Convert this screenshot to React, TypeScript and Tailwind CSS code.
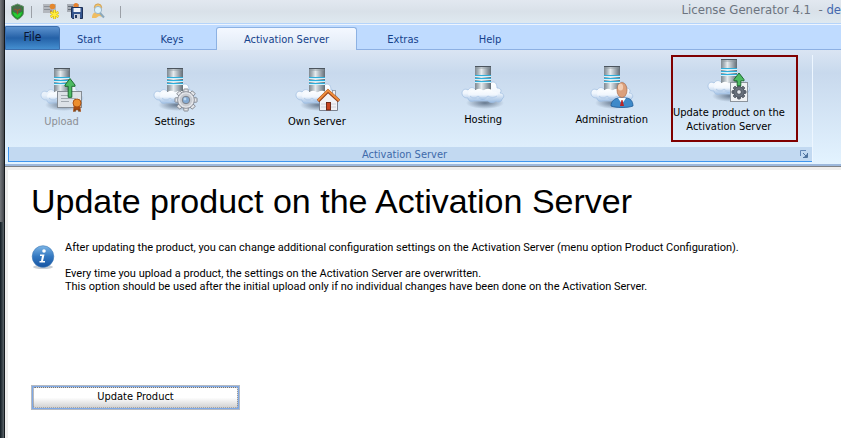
import type { ReactNode } from "react";

const TABS = ["Start", "Keys", "Activation Server", "Extras", "Help"];

const TAB_STYLES: Record<string, string> = {
  Start: "w-[58px]",
  Keys: "w-[88px] ml-[10px]",
  "Activation Server": "w-[141px]",
  Extras: "w-[92px]",
  Help: "w-[82px]",
};

function Gear({ cx, cy, r, dark = false }: { cx: number; cy: number; r: number; dark?: boolean }) {
  const stroke = dark ? "#4c535d" : "#7d828b";
  const fill = dark ? "#69717c" : "#e4e6ea";
  return (
    <g>
      {[0, 45, 90, 135].map((a) => (
        <rect
          key={a}
          x={cx - r * 0.2}
          y={cy - r}
          width={r * 0.4}
          height={r * 2}
          rx="0.6"
          fill={fill}
          stroke={stroke}
          strokeWidth="0.9"
          transform={`rotate(${a} ${cx} ${cy})`}
        />
      ))}
      <circle cx={cx} cy={cy} r={r * 0.76} fill={fill} stroke={stroke} strokeWidth="0.8" />
      <circle cx={cx} cy={cy} r={r * 0.58} fill={dark ? "#69717c" : "#c9ccd2"} />
      <circle cx={cx} cy={cy} r={r * 0.34} fill={dark ? "#e6e9ed" : "#83a9d2"} stroke={stroke} strokeWidth="1" />
      {!dark && <circle cx={cx - 1} cy={cy - 1} r="1.4" fill="#bdd8f0" />}
    </g>
  );
}

function GreenArrow({ x, y, h }: { x: number; y: number; h: number }) {
  return (
    <path
      d={`M${x} ${y} l5 6.5 v1.3 h-3.2 v${h} h-3.6 v-${h} h-3.2 v-1.3 z`}
      fill="#4dbb62"
      stroke="#1d6b32"
      strokeWidth="1"
      strokeLinejoin="round"
    />
  );
}

// Server standing on a cloud, every ribbon icon adds its own overlay
function CloudServer({ faded = false, children }: { faded?: boolean; children?: ReactNode }) {
  return (
    <svg width="46" height="46" viewBox="0 0 46 46" aria-hidden="true" className="shrink-0">
      <defs>
        <linearGradient id="tower" x1="0" x2="1" y1="0" y2="0">
          <stop offset="0" stopColor="#7f8991" />
          <stop offset="0.2" stopColor="#abb5bc" />
          <stop offset="0.4" stopColor="#e6ebee" />
          <stop offset="0.7" stopColor="#a3adb5" />
          <stop offset="1" stopColor="#626c75" />
        </linearGradient>
        <linearGradient id="cloud" x1="0" x2="0" y1="0" y2="1">
          <stop offset="0" stopColor="#ffffff" />
          <stop offset="0.55" stopColor="#f0f6fd" />
          <stop offset="1" stopColor="#9bbce2" />
        </linearGradient>
        <radialGradient id="shade">
          <stop offset="0" stopColor="#54677e" stopOpacity="0.85" />
          <stop offset="1" stopColor="#54677e" stopOpacity="0" />
        </radialGradient>
      </defs>
      <ellipse cx="25" cy="38" rx="19" ry="6" fill="url(#shade)" />
      <path
        d="M28 25c0-5 2-8 5-8 3 0 4 3 4 6 4 0 5 3 3 5 4 0 5 4 2 6 0 3-4 4-6 2-2 2-6 2-8 0H14c-3 1-6 0-6-3-4 0-6-2-6-5 0-3 3-5 6-3 2-3 5-3 7-1z"
        fill="url(#cloud)"
        stroke="#9dbbe0"
        strokeWidth="0.7"
        opacity={faded ? 0.75 : 1}
      />
      <rect x="15" y="1" width="16" height="24" fill="url(#tower)" />
      <path d="M15 1.500h16" stroke="#4c555e" />
      <path d="M16 3h14" stroke="#8d979f" strokeWidth="0.8" />
      <path d="M15 11.500h16M15 14.500h16M15 17.500h16" stroke="#d5f1fa" />
      <path d="M15 10.500h16M15 13.500h16M15 16.500h16" stroke="#2faedb" />
      <path
        d="M8 30c0-4 4-6 7-4 2-3 6-3 8 0 3-3 8-3 10 1 4-1 6 2 4 4-3 3-7 3-10 2-3 3-7 2-9 0-3 1-9 1-10-3z"
        fill="url(#cloud)"
      />
      <path d="M10 31c3 3 6 2 8 0 3 3 7 3 10 0 3 2 6 2 9 0" fill="none" stroke="#b5cdea" strokeWidth="1" />
      {children}
    </svg>
  );
}

function Certificate() {
  return (
    <g>
      <rect x="18.5" y="24.5" width="24" height="16" fill="#dde2e7" stroke="#858c94" />
      <path d="M22 28.5h8M22 31.5h15M22 34.5h8" stroke="#a2a9b0" />
      <path d="M35 36l-1 9 4-2 4 2-1-9z" fill="#a74b10" />
      <circle cx="38" cy="36" r="4" fill="#ed8e2c" stroke="#ac5415" />
      <path d="M36 42v3M40 42v3" stroke="#66421f" strokeWidth="1" />
      <GreenArrow x={31} y={11.5} h={11} />
    </g>
  );
}

function House() {
  return (
    <g>
      <rect x="38.5" y="23.5" width="3" height="6" fill="#f0f0f3" stroke="#878e9c" strokeWidth="0.8" />
      <path d="M25.500 33l8.500-8 9.500 8v10.500h-18z" fill="#f1f1f5" stroke="#7b8290" />
      <path d="M27 40h5M27 37h5M37 40h5M37 37h5" stroke="#c7cad3" strokeWidth="0.8" />
      <path d="M24 34l10-10 11 10" fill="none" stroke="#963e14" strokeWidth="3.4" />
      <path d="M24 33.500l10-10 11 10" fill="none" stroke="#ee8c3c" strokeWidth="2" />
      <rect x="32.500" y="35.500" width="4" height="7.500" fill="#c84420" stroke="#66200f" strokeWidth="0.9" />
    </g>
  );
}

function Person() {
  return (
    <g>
      <path d="M22 41c0-5 4-8 8-8h7c4 0 7 3 7 8-5 2-17 2-22 0z" fill="#3f8ac9" stroke="#205c98" strokeWidth="0.8" />
      <path d="M29 33l4 6 4-6z" fill="#ffffff" />
      <path d="M32.500 35l-1.500 6h4l-1.500-6z" fill="#ba2626" />
      <ellipse cx="33" cy="25" rx="5" ry="7.500" fill="#dba07c" stroke="#ac6b48" strokeWidth="0.7" />
      <ellipse cx="31.500" cy="22" rx="2.600" ry="3.500" fill="#f3cdb3" />
    </g>
  );
}

function GearSheet() {
  return (
    <g>
      <rect x="24.500" y="24.500" width="17" height="19" fill="#f0f2f4" stroke="#8b939c" />
      <Gear cx={33} cy={34} r={7} dark />
      <GreenArrow x={33} y={15} h={5} />
    </g>
  );
}

function RibbonButton({
  label,
  icon,
  offset = "pt-[12px]",
  disabled = false,
}: {
  label: string;
  icon: ReactNode;
  offset?: string;
  disabled?: boolean;
}) {
  return (
    <div className={`flex justify-center ${offset}`}>
      <button disabled={disabled} className="flex flex-col items-center self-start text-black disabled:text-[#8c8f94]">
        {icon}
        <span className="leading-[18px]">{label}</span>
      </button>
    </div>
  );
}

function TitleBar() {
  return (
    <header className="flex h-[23px] items-center bg-linear-to-b from-[#e2e8f0] via-[#d9e1e9] to-[#dfe9f0] pl-[5px]">
      <svg width="15" height="17" viewBox="0 0 15 17" aria-label="License Generator" role="img">
        <path d="M7.500 1l6 2.500v6c0 3-3 5.500-6 7-3-1.500-6-4-6-7v-6z" fill="#1d8f2a" stroke="#6f8873" />
        <path d="M7.500 2l5 2v4l-5 3-5-3V4z" fill="#4a6a4c" />
        <path d="M3 9l4.500 2L12 9c0 2.500-2 4.500-4.500 6C5 13.500 3 11.500 3 9z" fill="#25cc35" />
        <path d="M4.500 6l3 1.500 3-1.500M7.500 7.500v4" fill="none" stroke="#96542c" strokeWidth="1.200" />
      </svg>
      <span className="ml-[6px] h-3 w-px bg-[#9ba0a7]" />
      <button aria-label="New license" className="ml-[11px]">
        <svg width="17" height="17" viewBox="0 0 17 17">
          <path d="M0 1h13v9H0z" fill="#b4b8be" />
          <path d="M1 3.500h7M1 6.500h6" stroke="#8b9098" />
          <circle cx="9.500" cy="3.500" r="2.800" fill="#e4872d" />
          <path d="M8 6l-1 4h2z" fill="#a54b1e" />
          <path d="M11.500 7v9M7.600 9.200l7.800 4.600M15.400 9.200l-7.800 4.600" stroke="#c9a800" strokeWidth="2.600" />
          <path d="M11.500 7v9M7.600 9.200l7.800 4.600M15.400 9.200l-7.800 4.600" stroke="#ffec3d" strokeWidth="1.600" />
        </svg>
      </button>
      <button aria-label="Save" className="ml-[7px]">
        <svg width="17" height="17" viewBox="0 0 17 17">
          <path d="M0 1h12v8H0z" fill="#a7acb4" />
          <path d="M1 3.500h5M1 6.500h3" stroke="#666d76" />
          <circle cx="9" cy="2.500" r="2.500" fill="#e5812d" />
          <path d="M4.500 4.500h11v11h-10l-1-1z" fill="#34558e" stroke="#1d3058" />
          <path d="M6.500 5h7v4h-7z" fill="#f0f4fa" />
          <path d="M7 11h6v5H7z" fill="#ccd3de" />
          <path d="M8 12h2v3H8z" fill="#26395e" />
        </svg>
      </button>
      <button aria-label="Find customer" className="ml-[7px]">
        <svg width="15" height="17" viewBox="0 0 15 17">
          <path d="M1 15c0-4 2-6 5-6s6 2 6 5l-4-1-3 2z" fill="#efbd62" />
          <circle cx="7" cy="4.500" r="3.600" fill="#f3c56b" stroke="#d3a050" />
          <circle cx="7" cy="7" r="3.600" fill="#d9f0fb" stroke="#9db6c8" />
          <path d="M9 10l4 4.500" stroke="#8ba9bd" strokeWidth="2" />
        </svg>
      </button>
      <span className="ml-[14px] h-3 w-px bg-[#9ba0a7]" />
      <h1 className="ml-auto overflow-hidden pb-[3px] text-[13px] leading-4 whitespace-pre text-[#6c7480]">
        License Generator 4.1 {" - "}
        <span className="text-[#4468ae]">de</span>
      </h1>
    </header>
  );
}

function TabStrip() {
  return (
    <nav className="flex h-[27px] items-end border-t border-[#b5d4fa] bg-[#bfdbff] shadow-[inset_0_1px_0_#eef5ff,inset_0_-1px_0_#8db0e3]">
      <button className="h-[24px] w-[55px] rounded-tr-[3px] border border-[#3c6fae] bg-linear-to-b from-[#5c92cf] from-0% via-[#2461a7] via-50% to-[#458fd0] pb-[2px] text-[12px] leading-5 text-[#0a1430]">
        File
      </button>
      {TABS.map((tab) => (
        <button
          key={tab}
          className={
            tab === "Activation Server"
              ? `${TAB_STYLES[tab]} h-[23px] rounded-t-[3px] border border-b-0 border-[#8db2e3] bg-linear-to-b from-[#f4f8ff] to-[#e0eaf6] pt-[2px] text-[#15428b]`
              : `${TAB_STYLES[tab]} h-[23px] pt-[3px] text-[#15428b]`
          }
        >
          {tab}
        </button>
      ))}
    </nav>
  );
}

function Ribbon() {
  return (
    <section
      aria-label="Activation Server"
      className="border-b-2 border-[#9db8dc] bg-linear-to-b from-[#dae5f3] from-0% via-[#c8d9ed] via-20% to-[#e3f3ff] pt-[5px] pr-[28px] pb-[2px] pl-[3px]"
    >
      <div className="border-r border-[#edf6ff]">
        <div className="grid h-[92px] grid-cols-[107fr_119fr_165fr_167fr_90fr_14fr_127fr_14fr]">
          <RibbonButton label="Upload" disabled icon={<CloudServer faded><Certificate /></CloudServer>} />
          <RibbonButton label="Settings" icon={<CloudServer><Gear cx={34} cy={33} r={11} /></CloudServer>} />
          <RibbonButton label="Own Server" icon={<CloudServer><House /></CloudServer>} />
          <RibbonButton label="Hosting" offset="pt-[10px]" icon={<CloudServer />} />
          <RibbonButton label="Administration" offset="pt-[10px]" icon={<CloudServer><Person /></CloudServer>} />
          <button className="col-start-7 flex h-[87px] min-w-0 flex-col items-center gap-[2px] border-2 border-[#800000] pt-px pr-[11px] text-black">
            <CloudServer><GearSheet /></CloudServer>
            <span className="leading-[14px]">
              <span className="whitespace-nowrap">Update product on the</span> Activation Server
            </span>
          </button>
        </div>
        <div className="flex h-[15px] items-center border-b border-l border-[#3e95ee] bg-[#c2d9f1] pr-[4px]">
          <span className="flex-1 pt-px text-center leading-[14px] text-[#3e6aaa]">Activation Server</span>
          <button aria-label="Activation Server options">
            <svg width="8" height="8" viewBox="0 0 8 8">
              <path d="M0.500 6V0.500H6" fill="none" stroke="#6387b6" />
              <path d="M3 3l3 3M7.500 3v4.500H3" fill="none" stroke="#50749f" />
              <path d="M4 7l3-3v3z" fill="#50749f" />
            </svg>
          </button>
        </div>
      </div>
    </section>
  );
}

function InfoIcon() {
  return (
    <svg width="24" height="24" viewBox="0 0 24 24" className="mt-[4px] shrink-0" role="img" aria-label="Information">
      <defs>
        <linearGradient id="info" x1="0" x2="0" y1="0" y2="1">
          <stop offset="0" stopColor="#7cb5e6" />
          <stop offset="0.5" stopColor="#3378c1" />
          <stop offset="1" stopColor="#1654a2" />
        </linearGradient>
      </defs>
      <ellipse cx="12" cy="22" rx="10" ry="2" fill="#c9ced4" />
      <circle cx="12" cy="11.500" r="10.800" fill="url(#info)" stroke="#3e78b6" strokeWidth="0.600" />
      <circle cx="13" cy="6" r="1.800" fill="#fff" />
      <path d="M9 9.500h4.500L12 16h2v1.500H8.500V16H10l1-5H9z" fill="#fff" />
    </svg>
  );
}

function Content() {
  return (
    <main className="flex-1 border-t border-[#7f8286] bg-[#efeeed] pt-[3px] pl-[3px]">
      <div className="h-full bg-white pt-[10px] pl-[23px] text-black">
        <h2 className="font-['Liberation_Sans',Arial,sans-serif] text-[34px] leading-[42px] whitespace-nowrap">
          Update product on the Activation Server
        </h2>
        <div className="mt-[19px] flex gap-[10px]">
          <InfoIcon />
          <div className="font-['Roboto',Tahoma,sans-serif] leading-[13px] whitespace-nowrap">
            <p>
              After updating the product, you can change additional configuration settings on the Activation Server (menu
              option Product Configuration).
            </p>
            <p className="mt-[13px]">
              Every time you upload a product, the settings on the Activation Server are overwritten.
              <br />
              This option should be used after the initial upload only if no individual changes have been done on the
              Activation Server.
            </p>
          </div>
        </div>
        <button className="mt-[92px] h-[25px] w-[209px] border border-[#b5bac2] bg-[#7fa9e6] p-px">
          <span className="flex h-full items-center justify-center rounded-[2px] border border-dotted border-[#777] bg-linear-to-b from-white from-50% to-[#d4d4d4]">
            Update Product
          </span>
        </button>
      </div>
    </main>
  );
}

export default function App() {
  return (
    <div className="flex min-h-screen overflow-hidden bg-white font-['DejaVu_Sans_Condensed',Tahoma,sans-serif] text-[11px]">
      <div className="flex w-[5px] shrink-0 flex-col border-r border-[#15191d]">
        <div className="h-[222px] bg-linear-to-r from-[#74777b] to-[#45484d]" />
        <div className="flex-1 bg-linear-to-r from-[#111c23] to-[#5c6469]" />
      </div>
      <div className="flex min-w-0 flex-1 flex-col">
        <TitleBar />
        <TabStrip />
        <Ribbon />
        <Content />
      </div>
    </div>
  );
}
